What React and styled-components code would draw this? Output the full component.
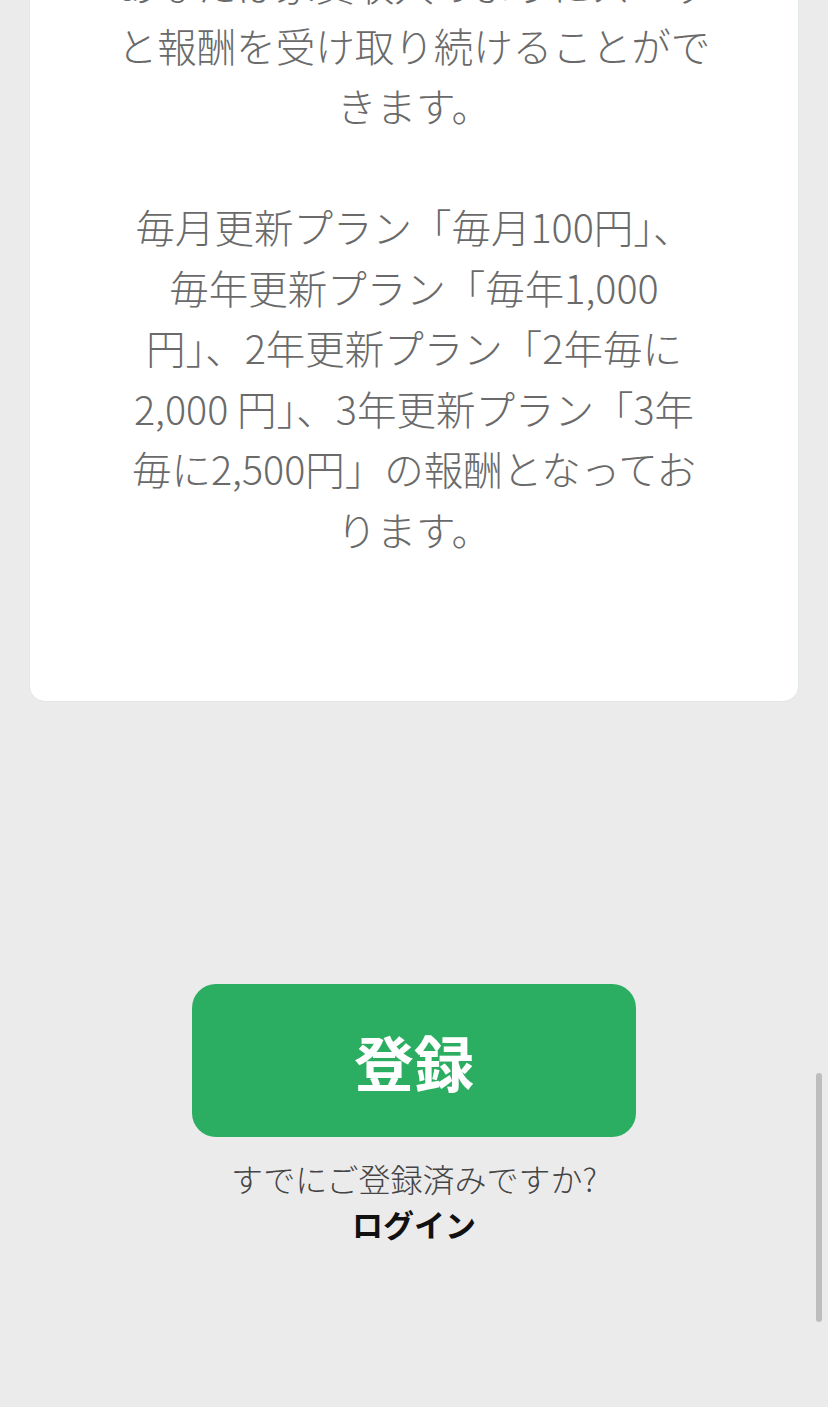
import React from 'react';
import styled, { createGlobalStyle } from 'styled-components';

const GlobalStyle = createGlobalStyle`
  html, body {
    margin: 0;
    padding: 0;
    background: #ebebeb;
    overflow: hidden;
  }
  body {
    font-family: "Noto Sans CJK JP", "Noto Sans", sans-serif;
  }
`;

const Page = styled.div`
  width: 828px;
  height: 1407px;
  display: flex;
  flex-direction: column;
  align-items: center;
  background: #ebebeb;
`;

// 上がスクロールで切れているカード
const Card = styled.section`
  width: 768px;
  margin-top: -96px;
  padding: 50px 0 142px;
  box-sizing: border-box;
  background: #fff;
  border-radius: 0 0 15px 15px;
  box-shadow: 0 0 0 1px rgba(220, 228, 228, 0.6);
`;

const Paragraph = styled.p`
  margin: 0;
  font-size: 39.5px;
  font-weight: 300;
  line-height: 60.5px;
  color: #6a6a6a;
  text-align: center;
  white-space: nowrap;
  & + & {
    margin-top: 60.5px;
  }
`;

const Actions = styled.div`
  margin-top: 283px;
  display: flex;
  flex-direction: column;
  align-items: center;
`;

const RegisterButton = styled.button`
  width: 444px;
  height: 153px;
  border: 0;
  outline: 0;
  border-radius: 24px;
  background: #2bae61;
  color: #fff;
  font-family: "Noto Sans CJK JP", sans-serif;
  font-size: 60px;
  font-weight: 700;
  cursor: pointer;
`;

const Question = styled.p`
  margin: 20px 0 0;
  font-size: 32px;
  font-weight: 300;
  line-height: 42px;
  color: #444;
`;

const LoginLink = styled.a`
  margin-top: 4px;
  font-size: 31px;
  line-height: 42px;
  font-weight: 700;
  color: #111;
  text-decoration: none;
`;

const ScrollThumb = styled.div`
  position: fixed;
  left: 816px;
  top: 1073px;
  width: 6px;
  height: 249px;
  border-radius: 3px;
  background: #bdbdbd;
`;

const lines1 = [
  'あなたは家賃収入のようにズーッ',
  'と報酬を受け取り続けることがで',
  'きます。',
];

const lines2 = [
  '毎月更新プラン「毎月100円」、',
  '毎年更新プラン「毎年1,000',
  '円」、2年更新プラン「2年毎に',
  '2,000 円」、3年更新プラン「3年',
  '毎に2,500円」の報酬となってお',
  'ります。',
];

function Lines({ items }) {
  return items.map((t, i) => (
    <React.Fragment key={i}>
      {t}
      {i < items.length - 1 && <br />}
    </React.Fragment>
  ));
}

export default function App() {
  return (
    <>
      <GlobalStyle />
      <Page>
        <Card>
          <Paragraph>
            <Lines items={lines1} />
          </Paragraph>
          <Paragraph>
            <Lines items={lines2} />
          </Paragraph>
        </Card>

        <Actions>
          <RegisterButton>登録</RegisterButton>
          <Question>すでにご登録済みですか?</Question>
          <LoginLink href="#">ログイン</LoginLink>
        </Actions>
      </Page>
      <ScrollThumb />
    </>
  );
}
